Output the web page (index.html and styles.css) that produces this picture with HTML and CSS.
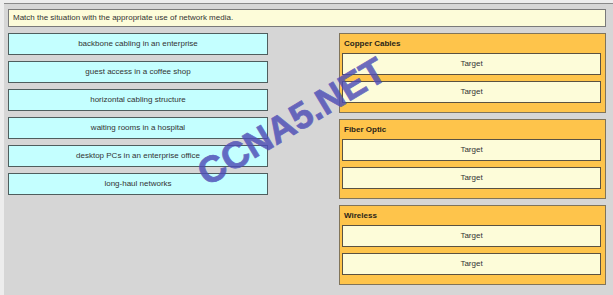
FILE: index.html
```html
<!DOCTYPE html>
<html lang="en">
<head>
    <meta charset="UTF-8">
    <title>Match network media</title>
    <link rel="stylesheet" href="styles.css">
</head>
<body>
    <div class="frame">
        <div class="question">Match the situation with the appropriate use of network media.</div>

        <div class="board">
            <div class="sources">
                <div class="item">backbone cabling in an enterprise</div>
                <div class="item">guest access in a coffee shop</div>
                <div class="item">horizontal cabling structure</div>
                <div class="item">waiting rooms in a hospital</div>
                <div class="item">desktop PCs in an enterprise office</div>
                <div class="item">long-haul networks</div>
            </div>

            <div class="groups">
                <div class="group">
                    <div class="group-title">Copper Cables</div>
                    <div class="target">Target</div>
                    <div class="target">Target</div>
                </div>
                <div class="group">
                    <div class="group-title">Fiber Optic</div>
                    <div class="target">Target</div>
                    <div class="target">Target</div>
                </div>
                <div class="group">
                    <div class="group-title">Wireless</div>
                    <div class="target">Target</div>
                    <div class="target">Target</div>
                </div>
            </div>
        </div>

        <div class="watermark">CCNA5.NET</div>
    </div>
</body>
</html>
```

FILE: styles.css
```css
* {
    margin: 0;
    padding: 0;
    box-sizing: border-box;
    font-family: 'Liberation Sans', Arial, sans-serif;
}

body {
    background-color: #ededed;
    color: #333;
    font-size: 8px;
    width: 613px;
    height: 295px;
    overflow: hidden;
}

.frame {
    position: relative;
    margin: 3px 0 0 4px;
    height: 292px;
    border-top: 1px solid #8a8a8a;
    background-color: #d6d6d6;
    padding: 5px 7px 0 4px;
}

.question {
    height: 18px;
    line-height: 16px;
    padding-left: 4px;
    background-color: #fdfcd9;
    border: 1px solid #7a7a7a;
}

.board {
    display: flex;
    justify-content: space-between;
    margin-top: 6px;
}

.sources {
    width: 260px;
    display: flex;
    flex-direction: column;
    gap: 6px;
}

.item {
    height: 22px;
    line-height: 20px;
    text-align: center;
    background-color: #c4ffff;
    border: 1px solid #4f5e5e;
}

.groups {
    width: 267px;
    display: flex;
    flex-direction: column;
    gap: 6px;
}

.group {
    height: 80px;
    background-color: #fec44b;
    border: 1px solid #80745a;
    padding: 0 4px 0 2px;
    display: flex;
    flex-direction: column;
    gap: 6px;
}

.group-title {
    height: 13px;
    line-height: 19px;
    padding-left: 2px;
    font-weight: bold;
    color: #2a2418;
}

.target {
    height: 22px;
    line-height: 20px;
    text-align: center;
    background-color: #fdfcd9;
    border: 1px solid #5a5242;
}

.watermark {
    position: absolute;
    left: 182px;
    top: 97px;
    font-size: 37px;
    font-weight: bold;
    color: #4d4db6;
    -webkit-text-stroke: 0.8px #4d4db6;
    opacity: 0.82;
    transform: rotate(-31deg);
    transform-origin: center;
    white-space: nowrap;
}
```
